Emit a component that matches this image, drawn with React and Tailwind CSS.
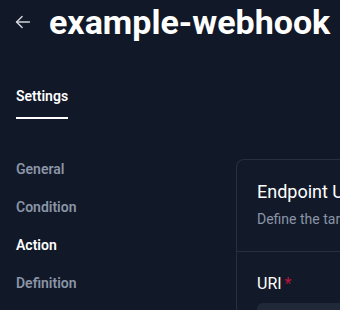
export default function App() {
  const items = ["General", "Condition", "Action", "Definition"];
  return (
    <div className="h-[310px] w-[340px] overflow-hidden bg-[#111827] font-['Roboto',sans-serif]">
      <div className="flex h-[42px] items-center pl-[12px] pt-[1px]">
        <svg className="shrink-0" width="22" height="22" viewBox="0 0 24 24" fill="none" stroke="#d1d5db" strokeWidth="1.6" strokeLinecap="round" strokeLinejoin="round">
          <path d="M19 12H5" />
          <path d="M11 18l-6-6 6-6" />
        </svg>
        <h1 className="ml-[15px] whitespace-nowrap text-[34px] font-bold leading-none text-white">example-webhook</h1>
      </div>
      <div className="mt-[42px] pl-[16px]">
        <div className="inline-flex flex-col">
          <span className="text-[14px] font-semibold leading-[20px] text-white">Settings</span>
          <span className="mt-[11px] h-[2px] w-full bg-white" />
        </div>
      </div>
      <div className="mt-[40px] flex">
        <nav className="flex w-[236px] shrink-0 flex-col gap-[18px] pl-[16px]">
          {items.map((it) => (
            <span key={it} className={"text-[14px] font-semibold leading-[20px] " + (it === "Action" ? "text-white" : "text-[#8a94a6]")}>{it}</span>
          ))}
        </nav>
        <div className="w-[200px] shrink-0 rounded-tl-[8px] border-l border-t border-[#263041] bg-[#121a29]">
          <div className="border-b border-[#263041] px-[20px] pb-[22px] pt-[18px]">
            <div className="whitespace-nowrap text-[18px] leading-[28px] text-white">Endpoint URL</div>
            <div className="mt-[3px] whitespace-nowrap text-[14px] leading-[20px] text-[#8a94a6]">Define the target endpoint</div>
          </div>
          <div className="px-[20px] pt-[20px]">
            <div className="text-[16px] leading-[24px] text-white">URI<span className="ml-[3px] text-[#be123c]">*</span></div>
            <div className="mt-[7px] h-[36px] rounded-[6px] bg-[#1f2937]" />
          </div>
        </div>
      </div>
    </div>
  );
}
